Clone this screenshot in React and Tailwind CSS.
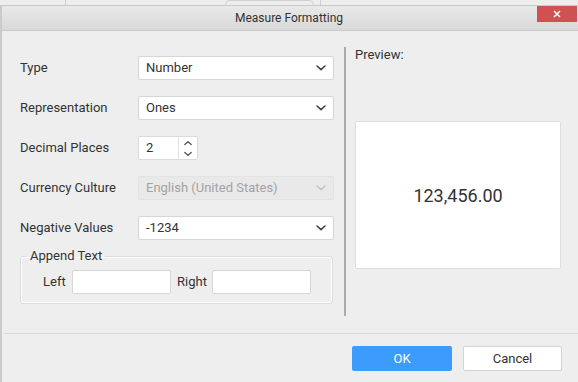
import React from 'react';

const Chevron = ({ className = '' }) => (
  <svg width="10" height="6" viewBox="0 0 10 6" className={className}>
    <path d="M1 1l4 3.6L9 1" fill="none" stroke="currentColor" strokeWidth="1.6" strokeLinecap="round" strokeLinejoin="round" />
  </svg>
);

const Select = ({ value, disabled }) => (
  <div
    className={
      'w-[196px] h-[24px] flex items-center justify-between pl-[7px] pr-[7px] rounded-[2px] border ' +
      (disabled ? 'bg-[#e9e9e9] border-[#e3e3e3] text-[#a3a3a3]' : 'bg-white border-[#d6d6d6] text-[#333]')
    }
  >
    <span>{value}</span>
    <Chevron className={disabled ? 'text-[#c4c4c4]' : 'text-[#444]'} />
  </div>
);

const Row = ({ label, children }) => (
  <div className="flex items-center h-[24px]">
    <div className="w-[118px] text-[#333]">{label}</div>
    {children}
  </div>
);

export default function App() {
  return (
    <div className="w-[578px] h-[382px] overflow-hidden flex flex-col bg-[#eeeeee] text-[13px]" style={{ fontFamily: 'Roboto, "Liberation Sans", sans-serif' }}>
      {/* app behind the dialog */}
      <div className="h-[5px] flex bg-[#ededed]">
        <div className="w-[66px] border-r border-[#cfcfcf]" />
        <div className="w-[159px]" />
        <div className="w-[89px] border-x border-t border-[#d0d0d0] rounded-t-[6px]" />
        <div className="w-[7px] border-r border-[#cfcfcf]" />
      </div>

      <div className="flex-1 flex flex-col border-l-2 border-[#cbcbcb]">
        {/* header */}
        <div className="relative h-[26px] flex items-center justify-center border-t border-b border-[#c9c9c9] bg-gradient-to-b from-[#e9e9e9] to-[#d8d8d8]">
          <span className="text-[12px] text-[#333] pr-[2px]">Measure Formatting</span>
          <button className="absolute right-[1px] top-0 w-[40px] h-[16px] bg-[#cf5152] flex items-center justify-center">
            <svg width="8" height="8" viewBox="0 0 8 8">
              <path d="M1 1l6 6M7 1L1 7" stroke="white" strokeWidth="1.5" />
            </svg>
          </button>
        </div>

        {/* body */}
        <div className="h-[302px] flex pt-[16px]">
          <div className="w-[342px] pl-[18px] pt-[9px] flex flex-col gap-[16px]">
            <Row label="Type"><Select value="Number" /></Row>
            <Row label="Representation"><Select value="Ones" /></Row>
            <Row label="Decimal Places">
              <div className="flex h-[24px] rounded-[2px] border border-[#dadada] bg-white">
                <div className="w-[39px] pl-[7px] flex items-center text-[#333]">2</div>
                <div className="w-[19px] border-l border-[#e2e2e2] flex flex-col items-center justify-center gap-[5px] text-[#555]">
                  <Chevron className="rotate-180 w-[8px]" />
                  <Chevron className="w-[8px]" />
                </div>
              </div>
            </Row>
            <Row label="Currency Culture"><Select value="English (United States)" disabled /></Row>
            <Row label="Negative Values"><Select value="-1234" /></Row>

            <fieldset className="w-[313px] h-[56px] -mt-[8px] pl-[6px] border border-[#d9dde0] rounded-[3px] shadow-[inset_0_0_0_1px_#ffffff]">
              <legend className="px-[3px] text-[#333] leading-[16px]">Append Text</legend>
              <div className="flex items-center pl-[16px] pt-[6px] text-[#333]">
                <span className="w-[29px]">Left</span>
                <div className="w-[99px] h-[24px] bg-white border border-[#d6d6d6] rounded-[2px]" />
                <span className="w-[41px] pl-[6px]">Right</span>
                <div className="w-[99px] h-[24px] bg-white border border-[#d6d6d6] rounded-[2px]" />
              </div>
            </fieldset>
          </div>

          <div className="w-[2px] h-[269px] bg-[#ababab]" />

          <div className="pl-[9px] flex flex-col">
            <div className="h-[16px] leading-[16px] text-[#333]">Preview:</div>
            <div className="mt-[58px] w-[206px] h-[148px] bg-white border border-[#dedede] rounded-[2px] flex items-center justify-center text-[18px] text-[#333]">
              123,456.00
            </div>
          </div>
        </div>

        {/* footer */}
        <div className="flex-1 border-t border-[#d9d9d9] ml-[2px] flex justify-end gap-[11px] pt-[12px] pr-[16px]">
          <button className="w-[100px] h-[25px] rounded-[2px] bg-[#3d9bfd] text-white text-[13px]">OK</button>
          <button className="w-[99px] h-[25px] rounded-[2px] bg-white border border-[#d3d3d3] text-[#333] text-[13px]">Cancel</button>
        </div>
      </div>
    </div>
  );
}
